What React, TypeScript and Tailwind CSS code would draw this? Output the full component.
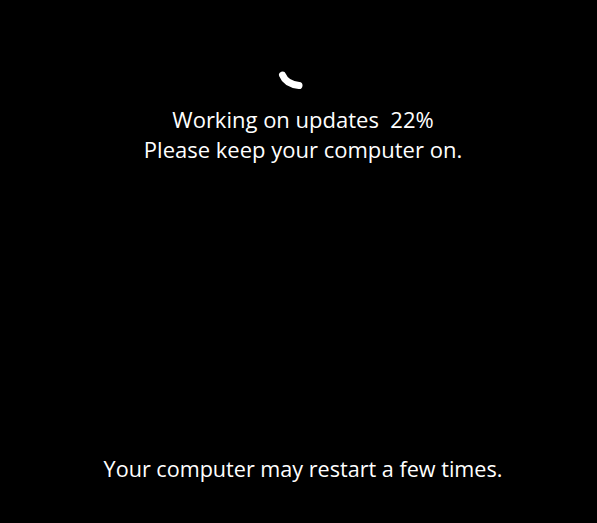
export default function App() {
  return (
    <div className="flex h-[523px] w-[597px] flex-col items-center bg-black font-['Open_Sans',sans-serif] text-[22px] text-white">
      {/* Spinner */}
      <svg className="mt-[70px] ml-[-14px] h-[22px] w-[28px]" viewBox="0 0 28 22" fill="none">
        <path
          d="M4.5 5 Q 8 14 21 15.5"
          stroke="white"
          strokeWidth="7"
          strokeLinecap="round"
        />
      </svg>

      <div className="mt-[12px] ml-[9px] flex flex-col items-center leading-[30px]">
        <p className="whitespace-pre">Working on updates  22%</p>
        <p>Please keep your computer on.</p>
      </div>

      <p className="mt-auto mb-[39px] ml-[9px] text-[21.6px] leading-[30px]">Your computer may restart a few times.</p>
    </div>
  );
}
